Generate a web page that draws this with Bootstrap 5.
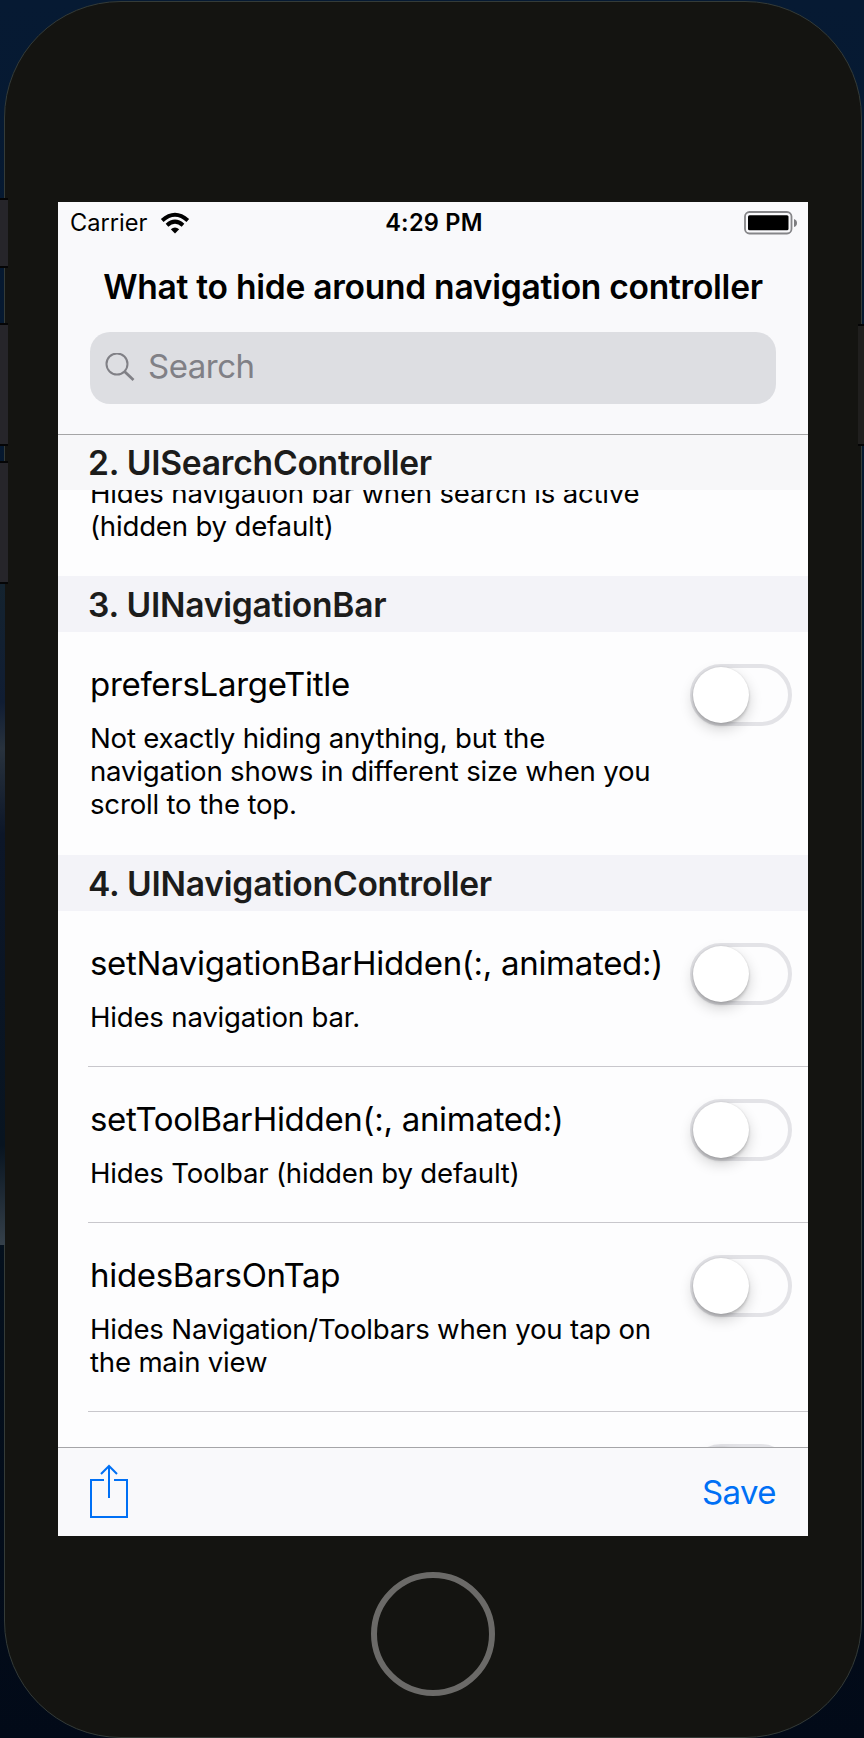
<!DOCTYPE html>
<html lang="en">
<head>
<meta charset="utf-8">
<meta name="viewport" content="width=device-width, initial-scale=1">
<title>What to hide around navigation controller</title>
<link href="https://cdn.jsdelivr.net/npm/bootstrap@5.3.0/dist/css/bootstrap.min.css" rel="stylesheet">
<style>
  body { width: 864px; height: 1738px; font-family: Inter, "Liberation Sans", sans-serif; color: #000;
    background: linear-gradient(#061a33 0, #06182e 600px, #05121f 1100px, #020a18 1738px); }
  .desk-glow { left: 0; top: 583px; width: 5px; height: 662px;
    background: linear-gradient(#14232f, #101d33 18%, #28323d 25%, #0c1628 38%, #081420 85%, #35404a); }
  .phone { margin: 1px 2px 0 4px; height: 1737px; border: 1px solid #343b38; border-radius: 117px; background: #141411;
    padding: 200px 52px 0 53px; }
  .side-key { background: #26252a; border: solid #050506; border-width: 2px 0; }
  .key-mute { left: 0; top: 198px; width: 8px; height: 70px; }
  .key-up { left: 0; top: 323px; width: 8px; height: 123px; }
  .key-down { left: 0; top: 461px; width: 8px; height: 123px; }
  .key-power { right: 0; top: 324px; width: 6px; height: 122px; background: #201f1e; }
  .screen { width: 750px; height: 1334px; background: #fdfdfe; }
  .top-area { height: 233px; background: #f9f9fb; border-bottom: 1px solid #a5a5a6; }
  .status { height: 40px; padding: 0 10px 0 12px; font-size: 23.6px; line-height: 42px; }
  .status .clock { font-weight: 600; letter-spacing: .25px; }
  .page-title { font-size: 33.6px; font-weight: 600; line-height: 41px; padding-top: 24px; letter-spacing: -.27px; }
  .search { height: 72px; margin: 25px 32px 0; border-radius: 20px; background: #dddee2; color: #808086; font-size: 33px; padding-left: 15px; letter-spacing: -.5px; }
  .search span { margin-left: 13px; margin-top: -2px; }
  .group-head { height: 56px; padding-left: 30px; background: #f3f3f8; font-size: 33.6px; font-weight: 600; line-height: 58px; letter-spacing: -.23px; color: #1c1c1b; }
  .group-first { height: 55px; background: #f7f7f9; line-height: 56px; }
  .cell { padding: 32px 16px 32px 32px; }
  .cell-line { margin-left: 30px; height: 1px; background: #c8c7cc; }
  .cell-name { font-size: 33px; line-height: 41px; letter-spacing: -.3px; white-space: nowrap; }
  .cell-info { font-size: 27.6px; line-height: 33.2px; letter-spacing: -.2px; white-space: nowrap; margin-top: 17px; }
  .cell-last { padding-bottom: 33px; }
  .scrolled { height: 86px; }
  .toggle { width: 102px; height: 62px; border: 4px solid #e3e3e7; border-radius: 31px; }
  .toggle i { display: block; width: 56px; height: 56px; border-radius: 50%; background: #fff; margin: -1px 0 0 -1px;
    box-shadow: 0 6px 14px rgba(0,0,0,.18), 0 3px 3px rgba(0,0,0,.14), 0 0 2px rgba(0,0,0,.12); }
  .toolbar { height: 89px; border-top: 1px solid #a5a5a8; background: #f9f9fb; padding: 0 32px; }
  .toolbar svg { margin-top: -2px; }
  .save { font-size: 33px; color: #0070f5; letter-spacing: -.6px; padding-top: 1px; }
  .home { width: 124px; height: 124px; border: 6px solid #6b6a68; border-radius: 50%; margin: 36px 0 0 313px; }
</style>
</head>
<body class="position-relative overflow-hidden">
<div class="desk-glow position-absolute"></div>
<main class="phone">
  <div class="screen d-flex flex-column overflow-hidden">
    <header class="top-area flex-shrink-0">
      <div class="status row g-0">
        <div class="col d-flex align-items-center">
          <span>Carrier</span>
          <svg class="ms-2 ps-1" width="36" height="22" viewBox="0 0 32 22" fill="none" stroke="#000" stroke-width="4">
            <path d="M3.200 8.500Q16 -3 28.800 8.500"/><path d="M8 13.200Q16 6.200 24 13.200"/>
            <path d="M11.800 17.300Q16 13.600 20.200 17.300L16 21.500Z" fill="#000" stroke="none"/>
          </svg>
        </div>
        <div class="col-auto clock">4:29 PM</div>
        <div class="col d-flex align-items-center justify-content-end">
          <svg width="54" height="24" viewBox="0 0 54 24">
            <rect x="1" y="1" width="46.500" height="21.500" rx="4.500" fill="none" stroke="#858588" stroke-width="1.800"/>
            <rect x="4" y="4.300" width="40.500" height="15" rx="1.500"/><path d="M50 8Q53 9 53 12Q53 15 50 16Z" fill="#7d7d80"/>
          </svg>
        </div>
      </div>
      <h1 class="page-title text-center text-nowrap mb-0">What to hide around navigation controller</h1>
      <div class="search d-flex align-items-center">
        <svg width="30" height="30" viewBox="0 0 30 30" fill="none" stroke="#808086"><circle cx="12" cy="11" r="10.500" stroke-width="2"/><path d="M19.500 18.500L28.500 27" stroke-width="2.800"/></svg>
        <span>Search</span>
      </div>
    </header>
    <section class="flex-fill overflow-hidden">
      <h2 class="group-head group-first mb-0">2. UISearchController</h2>
      <div class="cell scrolled d-flex align-items-end py-0 overflow-hidden">
        <p class="cell-info cell-last mb-0">Hides navigation bar when search is active<br>(hidden by default)</p>
      </div>
      <h2 class="group-head mb-0">3. UINavigationBar</h2>
      <div class="cell cell-last d-flex justify-content-between">
        <div><div class="cell-name">prefersLargeTitle</div>
          <p class="cell-info mb-0">Not exactly hiding anything, but the<br>navigation shows in different size when you<br>scroll to the top.</p></div>
        <div class="toggle"><i></i></div>
      </div>
      <h2 class="group-head mb-0">4. UINavigationController</h2>
      <div class="cell d-flex justify-content-between">
        <div><div class="cell-name">setNavigationBarHidden(:, animated:)</div>
          <p class="cell-info mb-0">Hides navigation bar.</p></div>
        <div class="toggle"><i></i></div>
      </div>
      <div class="cell-line"></div>
      <div class="cell d-flex justify-content-between">
        <div><div class="cell-name">setToolBarHidden(:, animated:)</div>
          <p class="cell-info mb-0">Hides Toolbar (hidden by default)</p></div>
        <div class="toggle"><i></i></div>
      </div>
      <div class="cell-line"></div>
      <div class="cell d-flex justify-content-between">
        <div><div class="cell-name">hidesBarsOnTap</div>
          <p class="cell-info mb-0">Hides Navigation/Toolbars when you tap on<br>the main view</p></div>
        <div class="toggle"><i></i></div>
      </div>
      <div class="cell-line"></div>
      <div class="cell d-flex justify-content-end">
        <div class="toggle"><i></i></div>
      </div>
    </section>
    <footer class="toolbar d-flex align-items-center justify-content-between flex-shrink-0">
      <svg width="38" height="54" viewBox="0 0 38 54" fill="none" stroke="#0070f5" stroke-width="2"><path d="M14 16H1V53H37V16H24M19 34V2M11 10L19 2L27 10"/></svg>
      <span class="save">Save</span>
    </footer>
  </div>
  <div class="home"></div>
</main>
<div class="side-key key-mute position-absolute"></div>
<div class="side-key key-up position-absolute"></div>
<div class="side-key key-down position-absolute"></div>
<div class="side-key key-power position-absolute"></div>
<script src="https://cdn.jsdelivr.net/npm/bootstrap@5.3.0/dist/js/bootstrap.bundle.min.js"></script>
</body>
</html>
